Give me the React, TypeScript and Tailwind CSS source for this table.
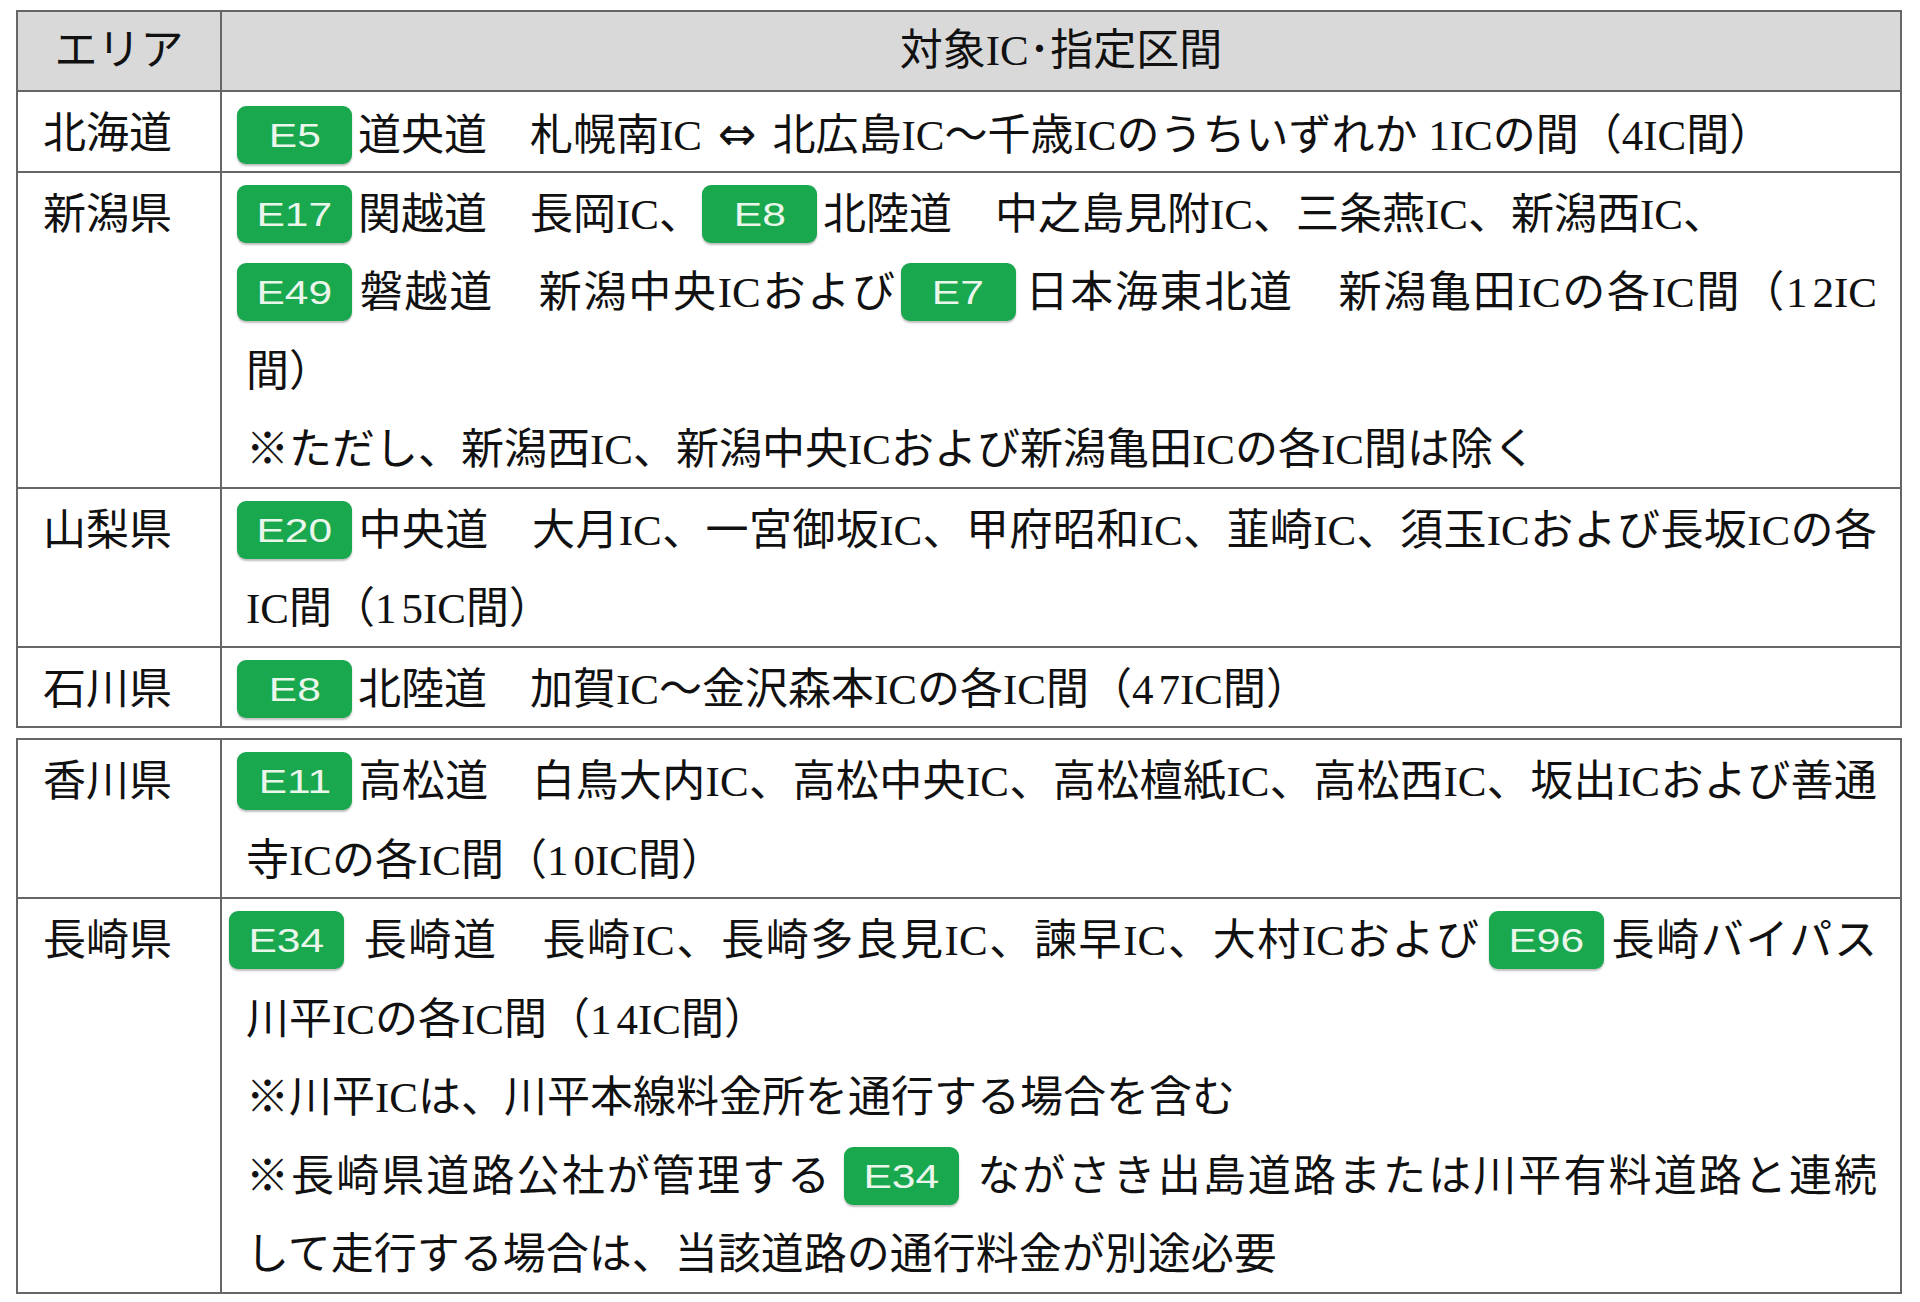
import type { ReactNode } from "react";

const FONT = '"Liberation Serif", "Noto Sans CJK JP", sans-serif';

function Badge({ code, className = "" }: { code: string; className?: string }) {
  return (
    <span
      className={`relative top-[-5px] inline-flex h-[58px] w-[115px] items-center justify-center rounded-[9px] bg-[#19a84d] align-middle text-[34px] leading-none text-[#eaf6ec] shadow-[0_2px_2px_rgba(0,0,0,0.25)] ${className}`}
      style={{ fontFamily: '"Liberation Sans", Arial, sans-serif' }}
    >
      <span className="inline-block scale-x-[1.25]">{code}</span>
    </span>
  );
}

// numbers in the source are set with wide digit spacing: "1 2IC"
function N({ v }: { v: string }) {
  return (
    <>
      <span className="tracking-[5px]">{v.slice(0, -1)}</span>
      {v.slice(-1)}
    </>
  );
}

// wrapped lines in the source are justified to the cell edge
function Line({ children, indent = true, justify = false }: { children: ReactNode; indent?: boolean; justify?: boolean }) {
  return (
    <div
      className={`h-[78.5px] whitespace-nowrap pt-[3px] leading-[78.5px] ${indent ? "pl-[9px]" : ""} ${
        justify ? "pr-[23px] text-justify [text-align-last:justify]" : ""
      }`}
    >
      {children}
    </div>
  );
}

function Row({ area, children, last = false }: { area: string; children: ReactNode; last?: boolean }) {
  return (
    <div className={`grid grid-cols-[204px_1fr] ${last ? "" : "border-b-2 border-[#666]"}`}>
      <div className="border-r-2 border-[#666] pl-[25px]">
        <div className="h-[78.5px] pt-[3px] leading-[78.5px]">{area}</div>
      </div>
      <div className="pl-[15px]">{children}</div>
    </div>
  );
}

export default function App() {
  return (
    <div className="min-h-screen bg-white pl-[16px] pt-[10px] text-[43px] text-[#111]" style={{ fontFamily: FONT }}>
      <div className="w-[1886px] border-2 border-[#666]">
        <div className="grid h-[80px] grid-cols-[204px_1fr] border-b-2 border-[#666] bg-[#d9d9d9]">
          <div className="flex items-center justify-center border-r-2 border-[#666]">エリア</div>
          <div className="flex items-center justify-center">対象IC･指定区間</div>
        </div>

        <Row area="北海道">
          <Line indent={false}>
            <Badge code="E5" className="mr-[6px]" />
            道央道　札幌南IC
            <span className="mx-[16px] text-[46px]" style={{ fontFamily: '"DejaVu Sans", sans-serif' }}>⇔</span>
            北広島IC〜千歳ICのうちいずれか 1ICの間（4IC間）
          </Line>
        </Row>

        <Row area="新潟県">
          <Line indent={false}>
            <Badge code="E17" className="mr-[6px]" />
            関越道　長岡IC、
            <Badge code="E8" className="mr-[6px]" />
            北陸道　中之島見附IC、三条燕IC、新潟西IC、
          </Line>
          <Line indent={false} justify>
            <Badge code="E49" className="mr-[6px]" />
            磐越道　新潟中央ICおよび
            <Badge code="E7" className="ml-[4px] mr-[8px]" />
            日本海東北道　新潟亀田ICの各IC間（<N v="12" />IC
          </Line>
          <Line>間）</Line>
          <Line>※ただし、新潟西IC、新潟中央ICおよび新潟亀田ICの各IC間は除く</Line>
        </Row>

        <Row area="山梨県">
          <Line indent={false} justify>
            <Badge code="E20" className="mr-[6px]" />
            中央道　大月IC、一宮御坂IC、甲府昭和IC、韮崎IC、須玉ICおよび長坂ICの各
          </Line>
          <Line>
            IC間（<N v="15" />IC間）
          </Line>
        </Row>

        <Row area="石川県" last>
          <Line indent={false}>
            <Badge code="E8" className="mr-[6px]" />
            北陸道　加賀IC〜金沢森本ICの各IC間（<N v="47" />IC間）
          </Line>
        </Row>
      </div>

      <div className="mt-[10px] w-[1886px] border-2 border-[#666]">
        <Row area="香川県">
          <Line indent={false} justify>
            <Badge code="E11" className="mr-[6px]" />
            高松道　白鳥大内IC、高松中央IC、高松檀紙IC、高松西IC、坂出ICおよび善通
          </Line>
          <Line>
            寺ICの各IC間（<N v="10" />IC間）
          </Line>
        </Row>

        <Row area="長崎県" last>
          <Line indent={false} justify>
            <Badge code="E34" className="-ml-[8px] mr-[18px]" />
            長崎道　長崎IC、長崎多良見IC、諫早IC、大村ICおよび
            <Badge code="E96" className="ml-[8px] mr-[6px]" />
            長崎バイパス
          </Line>
          <Line>
            川平ICの各IC間（<N v="14" />IC間）
          </Line>
          <Line>※川平ICは、川平本線料金所を通行する場合を含む</Line>
          <Line justify>
            ※長崎県道路公社が管理する
            <Badge code="E34" className="ml-[12px] mr-[16px]" />
            ながさき出島道路または川平有料道路と連続
          </Line>
          <Line>して走行する場合は、当該道路の通行料金が別途必要</Line>
        </Row>
      </div>
    </div>
  );
}
